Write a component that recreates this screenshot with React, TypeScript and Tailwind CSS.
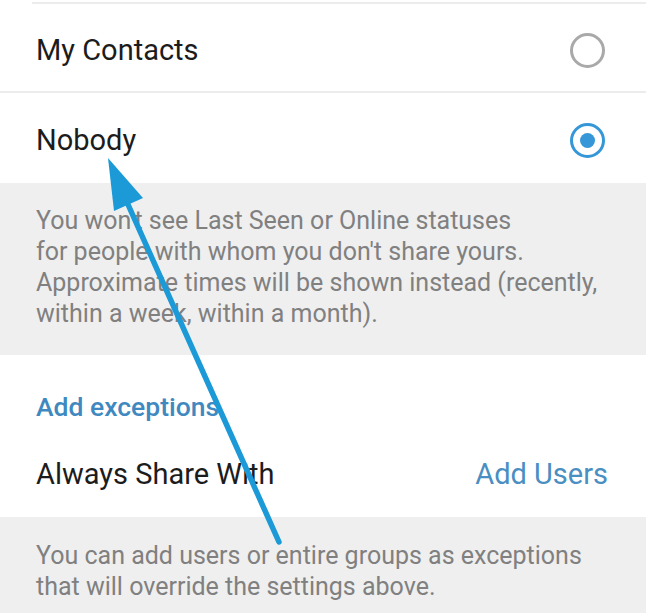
export default function App() {
  return (
    <div className="relative w-[646px] h-[613px] overflow-hidden bg-white font-['Roboto','Noto_Sans',sans-serif]">
      <div className="h-[2px] bg-white" />
      <div className="ml-[32px] border-t-2 border-[#ececec]" />

      {/* options */}
      <div className="flex h-[89px] items-center justify-between pl-[36px] pr-[41px] pt-[6px] border-b-2 border-[#ececec]">
        <span className="text-[29px] leading-none text-[#1c1c1c]">My Contacts</span>
        <span className="block w-[35px] h-[35px] rounded-full border-[3px] border-[#a9a9a9]" />
      </div>
      <div className="flex h-[90px] items-center justify-between pl-[36px] pr-[41px] pt-[4px]">
        <span className="text-[29px] leading-none text-[#1c1c1c]">Nobody</span>
        <span className="flex w-[35px] h-[35px] items-center justify-center rounded-full border-[3px] border-[#3597d8]">
          <span className="block w-[15px] h-[15px] rounded-full bg-[#3597d8]" />
        </span>
      </div>

      {/* info */}
      <div className="bg-[#efefef] pl-[36px] pr-[20px] pt-[22px] pb-[26px] text-[25px] leading-[31px] text-[#808080]">
        <p>You won't see Last Seen or Online statuses</p>
        <p>for people with whom you don't share yours.</p>
        <p>Approximate times will be shown instead (recently,</p>
        <p>within a week, within a month).</p>
      </div>

      {/* exceptions */}
      <div className="pl-[36px] pr-[38px]">
        <div className="pt-[37px] pb-[8px] text-[26.5px] leading-[30px] font-medium text-[#3f89c0]">Add exceptions</div>
        <div className="flex h-[87px] items-center justify-between pt-[2px]">
          <span className="text-[29px] leading-none text-[#1c1c1c]">Always Share With</span>
          <span className="text-[29px] leading-none text-[#4a8ec2]">Add Users</span>
        </div>
      </div>

      <div className="bg-[#efefef] pl-[36px] pt-[23px] pb-[40px] text-[25px] leading-[31px] text-[#808080]">
        <p>You can add users or entire groups as exceptions</p>
        <p>that will override the settings above.</p>
      </div>

      {/* annotation arrow */}
      <svg className="absolute left-0 top-0 pointer-events-none" width="646" height="613" viewBox="0 0 646 613">
        <line x1="279" y1="542" x2="126" y2="200" stroke="#1b9ad7" strokeWidth="5.5" strokeLinecap="round" />
        <polygon points="108,158 143,198 114,211" fill="#1b9ad7" />
      </svg>
    </div>
  )
}
